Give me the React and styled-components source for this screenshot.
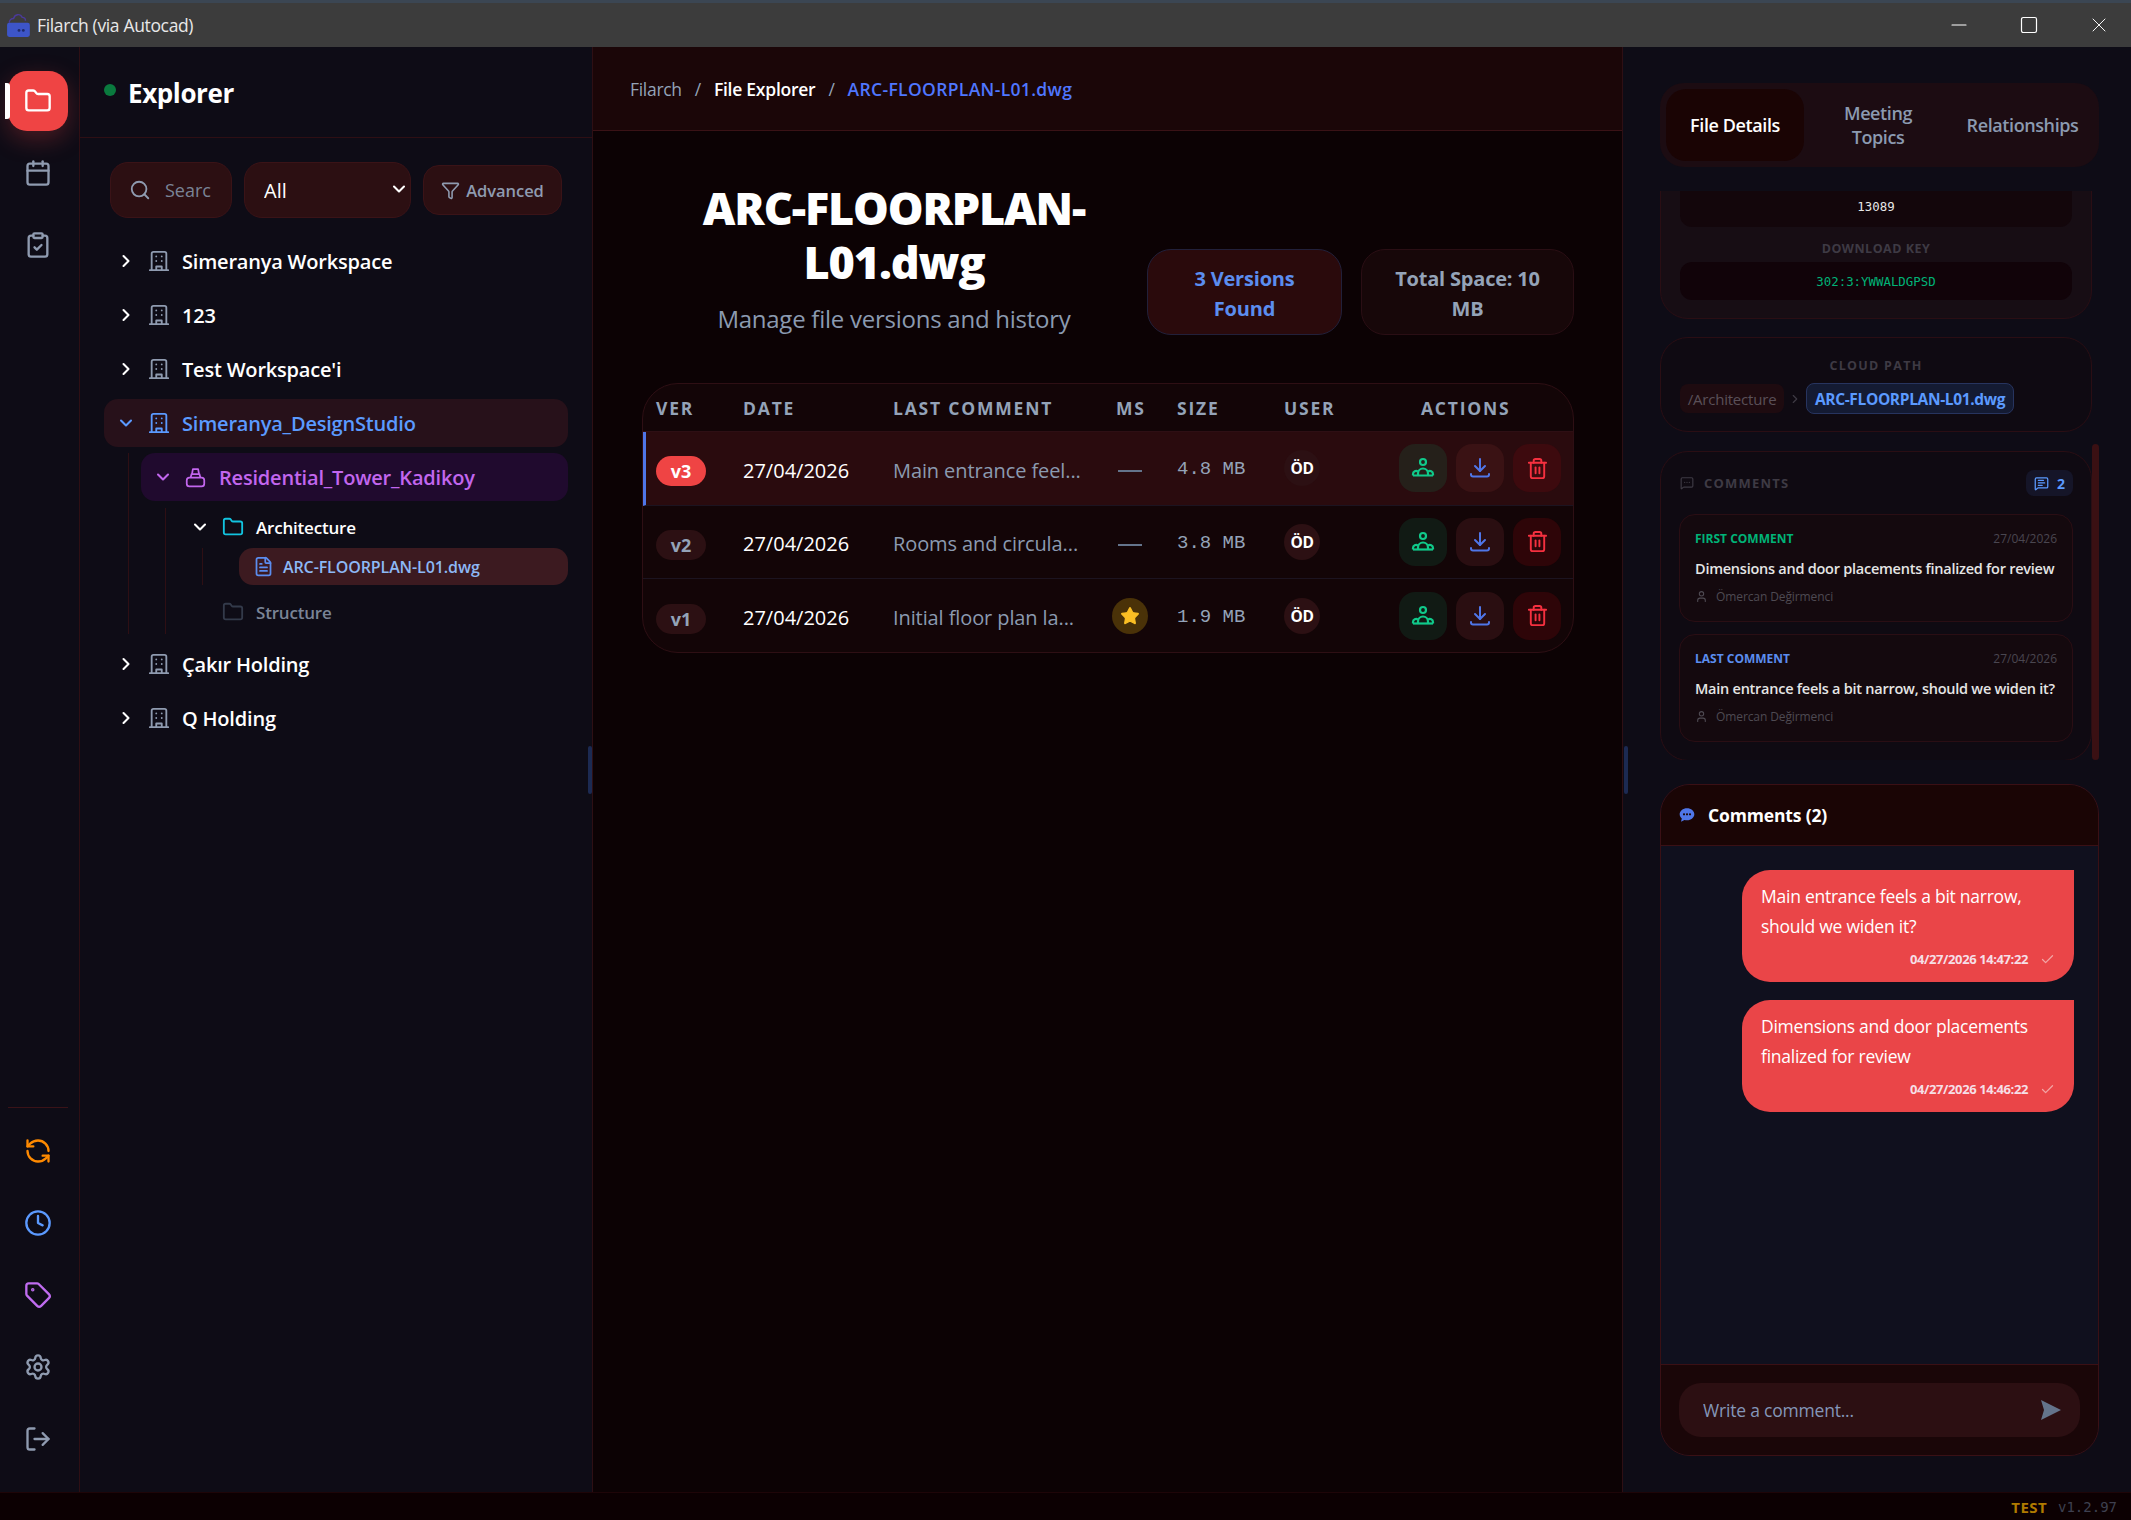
import React from "react";
import styled, { createGlobalStyle } from "styled-components";
import {
  Folder,
  Calendar,
  ClipboardCheck,
  RefreshCcw,
  Clock,
  Tag,
  Settings,
  LogOut,
  Search,
  Funnel,
  ChevronRight,
  ChevronDown,
  FileText,
  Trash2,
  Star,
  MessageSquareMore,
  MessageSquareText,
  User,
  Check,
  Minus,
  Square,
  X,
} from "lucide-react";

const SANS = `"Open Sans", "Noto Sans", sans-serif`;
const MONO = `"DejaVu Sans Mono", "Liberation Mono", monospace`;

const GlobalStyle = createGlobalStyle`
  html, body { margin: 0; padding: 0; background: #0c0003; }
  body { font-family: ${SANS}; overflow: hidden; }
  * { box-sizing: border-box; }
  input, select { font-family: ${SANS}; }
`;

const Shell = styled.div`
  width: 2131px;
  height: 1520px;
  display: flex;
  flex-direction: column;
  overflow: hidden;
`;

/* window title bar */
const TitleBar = styled.div`
  height: 47px;
  flex: none;
  background: #3c3c3c;
  border-top: 3px solid #3b4653;
  display: flex;
  align-items: center;
  padding-left: 6px;
  color: #e8e8e8;
  font-size: 17.5px;
  letter-spacing: -0.35px;
`;

const AppTitle = styled.span`
  margin-left: 5px;
`;

const WinControls = styled.div`
  margin-left: auto;
  display: flex;
  gap: 46px;
  padding-right: 20px;
  align-items: center;
  color: #fff;
`;

const WinButton = styled.span`
  display: flex;
  width: 24px;
  justify-content: center;
`;

const Body = styled.div`
  flex: 1;
  display: flex;
  min-height: 0;
`;

/* icon rail */
const Rail = styled.nav`
  width: 80px;
  flex: none;
  background: #0e0c16;
  border-right: 1px solid #2e0f14;
  display: flex;
  flex-direction: column;
  align-items: center;
  padding: 24px 0 11px;
`;

const RailButton = styled.div`
  position: relative;
  width: 60px;
  height: 60px;
  margin-bottom: 12px;
  margin-left: -3px;
  border-radius: 19px;
  display: flex;
  align-items: center;
  justify-content: center;
  color: ${({ $color }) => $color || "#8f9bb0"};
  background: ${({ $active }) => ($active ? "#ef4444" : "transparent")};
  box-shadow: ${({ $active }) => ($active ? "0 8px 24px rgba(239,68,68,.28)" : "none")};
`;

const RailMark = styled.span`
  position: absolute;
  left: -3px;
  top: 12px;
  width: 5px;
  height: 36px;
  background: #fff;
  border-radius: 0 3px 3px 0;
`;

const RailSpacer = styled.div`
  flex: 1;
`;

const RailDivider = styled.div`
  width: 60px;
  height: 1px;
  background: #3a1318;
  margin-bottom: 13px;
  margin-left: -3px;
`;

/* explorer column */
const Sidebar = styled.aside`
  width: 513px;
  flex: none;
  background: #0e0c16;
  border-right: 1px solid #2e0f14;
  position: relative;
  display: flex;
  flex-direction: column;
`;

const Handle = styled.span`
  position: absolute;
  right: ${({ $right }) => $right}px;
  top: 699px;
  width: 4px;
  height: 48px;
  background: #1c2a52;
  border-radius: 2px;
`;

const SideHead = styled.div`
  height: 91px;
  flex: none;
  border-bottom: 1px solid #2e0f14;
  display: flex;
  align-items: center;
  padding: 2px 0 0 24px;
  gap: 12px;
`;

const Dot = styled.span`
  width: 12px;
  height: 12px;
  border-radius: 50%;
  background: #0a7a3e;
  margin-top: -6px;
`;

const SideTitle = styled.h2`
  margin: 0;
  font-size: 26px;
  font-weight: 700;
  color: #fff;
  letter-spacing: -0.4px;
`;

const Filters = styled.div`
  display: flex;
  align-items: center;
  padding: 24px 30px 0 30px;
  gap: 12px;
`;

const SearchBox = styled.label`
  width: 122px;
  height: 56px;
  border-radius: 18px;
  background: #2c0f12;
  border: 1px solid #3a1317;
  display: flex;
  align-items: center;
  padding-left: 18px;
  gap: 14px;
  color: #8f9bb0;
`;

const SearchInput = styled.input`
  width: 46px;
  background: none;
  border: 0;
  outline: 0;
  padding: 0;
  font-size: 18px;
  color: #fff;
  &::placeholder {
    color: #7a8496;
    opacity: 1;
  }
`;

const SelectWrap = styled.div`
  position: relative;
  width: 167px;
  height: 56px;
  color: #fff;
`;

const Select = styled.select`
  appearance: none;
  width: 100%;
  height: 100%;
  border-radius: 18px;
  background: #2c0f12;
  border: 1px solid #3a1317;
  color: #fff;
  font-size: 20px;
  padding-left: 19px;
  outline: 0;
`;

const SelectArrow = styled.span`
  position: absolute;
  right: 2px;
  top: 17px;
  display: flex;
  pointer-events: none;
`;

const AdvancedButton = styled.button`
  width: 139px;
  height: 50px;
  border-radius: 16px;
  background: #2c0f12;
  border: 1px solid #3a1317;
  color: #8f9bb0;
  font-family: ${SANS};
  font-size: 16.5px;
  font-weight: 600;
  display: flex;
  align-items: center;
  justify-content: center;
  gap: 6px;
  letter-spacing: -0.05px;
`;

const Tree = styled.div`
  padding: 19px 24px 0;
  display: flex;
  flex-direction: column;
  gap: 6px;
`;

const TreeRow = styled.div`
  height: ${({ $h }) => $h || 48}px;
  margin-top: ${({ $top }) => $top || 0}px;
  border-radius: 14px;
  background: ${({ $bg }) => $bg || "transparent"};
  display: flex;
  align-items: center;
  color: ${({ $color }) => $color || "#fff"};
  font-size: ${({ $size }) => $size || 20}px;
  font-weight: 600;
  letter-spacing: -0.2px;
  white-space: nowrap;
`;

const Chevron = styled.span`
  width: 44px;
  padding-left: 12px;
  display: flex;
  flex: none;
  color: ${({ $color }) => $color || "#fff"};
`;

const TreeIcon = styled.span`
  width: ${({ $w }) => $w || 34}px;
  flex: none;
  display: flex;
  color: ${({ $color }) => $color || "#8f9bb0"};
`;

const Nested = styled.div`
  margin-left: 24px;
  padding-left: ${({ $pad }) => $pad || 12}px;
  margin-top: ${({ $top }) => $top || 0}px;
  border-left: 1px solid #2e0f14;
  display: flex;
  flex-direction: column;
  gap: ${({ $gap }) => $gap || 0}px;
`;

const FileRow = styled(TreeRow)`
  padding-left: 14px;
  font-size: 16px;
  height: 37px;
  letter-spacing: -0.1px;
`;

/* centre column */
const Main = styled.main`
  width: 1030px;
  flex: none;
  background: #0c0204;
  border-right: 1px solid #2e0f14;
  display: flex;
  flex-direction: column;
`;

const Crumbs = styled.div`
  height: 84px;
  flex: none;
  background: #1b0608;
  border-bottom: 1px solid #3a1216;
  display: flex;
  align-items: center;
  padding-left: 37px;
  font-size: 17.5px;
  letter-spacing: -0.3px;
  color: #94a3b8;
  gap: 13px;
`;

const CrumbNow = styled.span`
  color: ${({ $color }) => $color};
  font-weight: 600;
  letter-spacing: ${({ $spacing }) => $spacing || 0}px;
`;

const FileHead = styled.div`
  display: flex;
  align-items: flex-end;
  padding: 50px 48px 0 91px;
`;

const TitleBlock = styled.div`
  width: 420px;
  text-align: center;
  margin-right: 43px;
`;

const Title = styled.h1`
  margin: 0;
  font-size: 45px;
  line-height: 54px;
  font-weight: 800;
  color: #fff;
  letter-spacing: -1.15px;
`;

const Subtitle = styled.p`
  margin: 14px 0 0;
  font-size: 24px;
  line-height: 32px;
  color: #8b9ab0;
  letter-spacing: -0.25px;
`;

const Stats = styled.div`
  display: flex;
  gap: 19px;
`;

const Stat = styled.div`
  width: ${({ $w }) => $w}px;
  height: 86px;
  border-radius: 24px;
  background: ${({ $bg }) => $bg};
  border: 1px solid ${({ $line }) => $line};
  color: ${({ $color }) => $color};
  font-size: 20px;
  line-height: 30px;
  font-weight: 700;
  letter-spacing: -0.2px;
  text-align: center;
  padding: 14px 22px;
`;

const TableCard = styled.div`
  margin: 48px 48px 0 49px;
  border: 1px solid #2e0f14;
  border-radius: 36px;
  background: #130507;
  overflow: hidden;
`;

const columns = "87px 150px 223px 61px 107px 115px 1fr";

const HeadRow = styled.div`
  display: grid;
  grid-template-columns: ${columns};
  height: 48px;
  align-items: center;
  padding-left: 13px;
  border-bottom: 1px solid #2e0f14;
  font-size: 17.5px;
  font-weight: 700;
  letter-spacing: 1.8px;
  color: #94a3b8;
`;

const ActionsHead = styled.span`
  padding-left: 22px;
`;

const Row = styled.div`
  display: grid;
  grid-template-columns: ${columns};
  height: ${({ $last }) => ($last ? 73 : 73.5)}px;
  align-items: center;
  padding-left: ${({ $active }) => ($active ? 10 : 13)}px;
  background: ${({ $active }) => ($active ? "#2a0b0e" : "transparent")};
  border-left: ${({ $active }) => ($active ? "3px solid #4f76e8" : "0")};
  border-bottom: ${({ $last }) => ($last ? "0" : "1px solid #1c1420")};
`;

const VersionBadge = styled.span`
  width: 50px;
  height: 30px;
  margin-top: 6px;
  border-radius: 15px;
  background: ${({ $active }) => ($active ? "#ef4444" : "#2c1013")};
  color: ${({ $active }) => ($active ? "#fff" : "#94a3b8")};
  font-size: 18px;
  font-weight: 700;
  display: flex;
  align-items: center;
  justify-content: center;
`;

const DateCell = styled.span`
  margin-top: 4px;
  color: #fff;
  font-size: 20px;
`;

const CommentCell = styled.span`
  margin-top: 4px;
  color: #8b9ab0;
  font-size: 20px;
  letter-spacing: -0.1px;
  white-space: nowrap;
`;

const Dash = styled.span`
  width: 24px;
  margin: 6px 0 0 2px;
  height: 2px;
  background: #64748b;
`;

const StarBubble = styled.span`
  width: 36px;
  height: 36px;
  margin-left: -4px;
  border-radius: 50%;
  background: #4a3208;
  color: #fbbf24;
  display: flex;
  align-items: center;
  justify-content: center;
`;

const SizeCell = styled.span`
  margin-top: 2px;
  font-family: "Liberation Mono", monospace;
  font-size: 19px;
  white-space: pre;
  color: #94a3b8;
`;

const Avatar = styled.span`
  width: 36px;
  height: 36px;
  border-radius: 50%;
  background: #2c1013;
  color: #fff;
  font-size: 15.5px;
  font-weight: 700;
  display: flex;
  align-items: center;
  justify-content: center;
  letter-spacing: -0.3px;
`;

const Actions = styled.div`
  display: flex;
  gap: 9px;
`;

const ActionButton = styled.button`
  width: 48px;
  height: 48px;
  padding: 0;
  border: 0;
  border-radius: 16px;
  background: ${({ $bg }) => $bg};
  color: ${({ $color }) => $color};
  display: flex;
  align-items: center;
  justify-content: center;
`;

/* details column */
const Details = styled.section`
  flex: 1;
  min-width: 0;
  background: #0e0c16;
  display: flex;
  flex-direction: column;
  padding: 36px 32px 36px 37px;
  position: relative;
`;

const Tabs = styled.div`
  height: 84px;
  flex: none;
  border-radius: 24px;
  background: #1c0c12;
  display: grid;
  grid-template-columns: 138px 148px 1fr;
  padding: 6px;
  align-items: center;
  color: #8b9ab0;
  font-size: 18px;
  line-height: 24px;
  font-weight: 600;
  letter-spacing: -0.4px;
  text-align: center;
`;

const Tab = styled.div`
  height: 72px;
  border-radius: 20px;
  display: flex;
  align-items: center;
  justify-content: center;
  background: ${({ $active }) => ($active ? "#1a0404" : "transparent")};
  color: ${({ $active }) => ($active ? "#fff" : "#8b9ab0")};
`;

const Scroller = styled.div`
  margin-top: 24px;
  height: 569px;
  flex: none;
  overflow: hidden;
  position: relative;
  padding-right: 7px;
`;

const Thumb = styled.span`
  position: absolute;
  right: 0;
  top: 253px;
  width: 7px;
  height: 316px;
  border-radius: 4px;
  background: #3a1013;
`;

const Card = styled.div`
  border: 1px solid #2a0e14;
  border-radius: 28px;
  background: ${({ $bg }) => $bg || "#0f0a12"};
  height: ${({ $h }) => ($h ? `${$h}px` : "auto")};
  padding: ${({ $pad }) => $pad || "18px 19px"};
  margin-bottom: ${({ $gap }) => $gap || 18}px;
`;

const ScrolledCard = styled(Card)`
  margin-top: -40px;
  padding: 0 19px 19px;
  height: 168px;
`;

const ValueBox = styled.div`
  height: ${({ $h }) => $h}px;
  border-radius: 12px;
  background: #13060b;
  display: flex;
  align-items: ${({ $align }) => $align || "center"};
  justify-content: center;
  padding-bottom: ${({ $bottom }) => $bottom || 0}px;
  font-family: ${MONO};
  font-size: 12.4px;
  color: ${({ $color }) => $color};
`;

const KeyBox = styled(ValueBox)`
  background: #110309;
`;

const FieldLabel = styled.div`
  text-align: center;
  color: #3e3a44;
  font-size: 12.5px;
  font-weight: 700;
  letter-spacing: ${({ $wide }) => ($wide ? 1.3 : 0.5)}px;
  line-height: 16px;
  margin: ${({ $margin }) => $margin || 0};
`;

const PathRow = styled.div`
  display: flex;
  align-items: center;
  margin-top: 9px;
`;

const PathPill = styled.span`
  height: 29px;
  width: 104px;
  border-radius: 8px;
  background: #1e0b10;
  color: #5a5058;
  font-size: 15px;
  letter-spacing: -0.2px;
  display: flex;
  align-items: center;
  justify-content: center;
`;

const PathSep = styled.span`
  width: 22px;
  display: flex;
  justify-content: center;
  color: #3e3a44;
`;

const PathFile = styled.span`
  height: 31px;
  width: 208px;
  border-radius: 8px;
  background: #141b33;
  border: 1px solid #27345f;
  color: #5b9aff;
  font-size: 15.5px;
  font-weight: 700;
  letter-spacing: -0.35px;
  display: flex;
  align-items: center;
  justify-content: center;
`;

const CommentsHead = styled.div`
  display: flex;
  align-items: center;
  justify-content: space-between;
  margin-bottom: 18px;
`;

const HeadLabel = styled.div`
  display: flex;
  align-items: center;
  gap: 10px;
  margin-left: 1px;
  color: #3e3a44;
  font-size: 13px;
  font-weight: 700;
  letter-spacing: 1.2px;
`;

const CountBadge = styled.span`
  width: 47px;
  height: 26px;
  border-radius: 8px;
  background: #151528;
  color: #5b9aff;
  font-size: 14px;
  font-weight: 700;
  display: flex;
  align-items: center;
  justify-content: center;
  gap: 8px;
`;

const CommentBox = styled.div`
  height: 108px;
  border: 1px solid #2a0e14;
  border-radius: 16px;
  background: #14090e;
  padding: 16px 15px 0 15px;
  margin-bottom: 12px;
  &:last-child {
    margin-bottom: 0;
  }
`;

const CommentTop = styled.div`
  display: flex;
  justify-content: space-between;
  align-items: center;
  font-size: 12px;
  line-height: 16px;
`;

const CommentKind = styled.span`
  color: ${({ $color }) => $color};
  font-weight: 700;
  letter-spacing: 0;
`;

const CommentDate = styled.span`
  color: #4a4650;
`;

const CommentText = styled.div`
  margin-top: 12px;
  color: #e5e5e5;
  font-size: 14.5px;
  line-height: 20px;
  font-weight: 600;
  letter-spacing: -0.25px;
  white-space: nowrap;
`;

const CommentUser = styled.div`
  margin-top: 9px;
  display: flex;
  align-items: center;
  gap: 8px;
  color: #4e4a52;
  font-size: 12px;
  letter-spacing: -0.1px;
`;

/* chat */
const Chat = styled.div`
  flex: 1;
  min-height: 0;
  margin-top: 24px;
  border: 1px solid #3a1015;
  border-radius: 30px;
  overflow: hidden;
  display: flex;
  flex-direction: column;
  background: #10101e;
`;

const ChatHead = styled.div`
  height: 61px;
  flex: none;
  background: #1a0505;
  border-bottom: 1px solid #3a1015;
  display: flex;
  align-items: center;
  padding-left: 18px;
  gap: 13px;
  color: #fff;
  font-size: 17.5px;
  font-weight: 700;
  letter-spacing: -0.15px;
`;

const ChatIcon = styled.span`
  display: flex;
  color: #4f76e8;
`;

const Messages = styled.div`
  flex: 1;
  padding: 24px 24px 0 0;
  display: flex;
  flex-direction: column;
  align-items: flex-end;
  gap: 18px;
`;

const Bubble = styled.div`
  width: 332px;
  height: 112px;
  background: #ea4548;
  border-radius: 28px 0 28px 28px;
  padding: 12px 19px;
  color: #fff;
  font-size: 17.5px;
  line-height: 29.5px;
  letter-spacing: -0.25px;
`;

const BubbleMeta = styled.div`
  display: flex;
  justify-content: flex-end;
  align-items: center;
  gap: 12px;
  font-size: 13px;
  line-height: 18px;
  font-weight: 700;
  margin-top: 9px;
  letter-spacing: -0.4px;
  color: #f6dfe6;
`;

const MetaCheck = styled.span`
  display: flex;
  color: #f2a5a5;
`;

const ChatFoot = styled.div`
  height: 91px;
  flex: none;
  background: #1a0608;
  border-top: 1px solid #3a1015;
  padding: 18px 18px 0;
`;

const ChatInput = styled.div`
  height: 54px;
  border-radius: 22px;
  background: #2c0f12;
  display: flex;
  align-items: center;
  padding: 0 19px 0 24px;
`;

const ChatField = styled.input`
  flex: 1;
  background: none;
  border: 0;
  outline: 0;
  padding: 0;
  font-size: 17.5px;
  letter-spacing: -0.2px;
  color: #fff;
  &::placeholder {
    color: #8496b8;
    opacity: 1;
  }
`;

const Footer = styled.footer`
  height: 28px;
  flex: none;
  background: #0c0002;
  border-top: 1px solid #1e0508;
  display: flex;
  align-items: center;
  justify-content: flex-end;
  gap: 11px;
  padding-right: 14px;
  font-family: ${MONO};
  font-size: 14px;
`;

const EnvTag = styled.span`
  color: #b07a00;
  font-weight: 700;
  font-family: ${SANS};
  font-size: 15px;
  letter-spacing: 0.4px;
`;

const VersionTag = styled.span`
  color: #3e4050;
`;

//icons lucide does not have
const AppLogo = () => (
  <svg width="26" height="26" viewBox="0 0 24 24">
    <path d="M3 10c0-3 2-4 4-4 1-4 6-5 8-1 1.500 0 3 1 3 3" fill="none" stroke="#4b3a9a" strokeWidth="1.300" />
    <path d="M1 12a2 2 0 0 1 2-2h17a2 2 0 0 1 2 2v9a2 2 0 0 1-2 2H3a2 2 0 0 1-2-2z" fill="#3d55c8" />
    <circle cx="12" cy="17" r="1.300" fill="#1f2a6a" />
    <circle cx="16" cy="17" r="1.300" fill="#1f2a6a" />
  </svg>
);

const WorkspaceIcon = () => (
  <svg width="22" height="22" viewBox="0 0 24 24" fill="none" stroke="currentColor" strokeWidth="2" strokeLinecap="round" strokeLinejoin="round">
    <path d="M2 22h20" />
    <path d="M4 22V4a2 2 0 0 1 2-2h12a2 2 0 0 1 2 2v18" />
    <path d="M9 22v-4h6v4" />
    <path d="M9 7h.01M15 7h.01M9 12h.01M15 12h.01" />
  </svg>
);

const ProjectIcon = () => (
  <svg width="21" height="21" viewBox="0 0 24 24" fill="none" stroke="currentColor" strokeWidth="2" strokeLinejoin="round">
    <rect x="2" y="12" width="20" height="10" rx="3" />
    <path d="M6.500 12l1-4h9l1 4" />
    <path d="M8 8l1-5.500h6L16 8" />
  </svg>
);

const AssignIcon = () => (
  <svg width="24" height="24" viewBox="0 0 24 24" fill="none" stroke="currentColor" strokeWidth="2.200" strokeLinejoin="round">
    <circle cx="12" cy="6" r="3" />
    <path d="M2 19.500v-1.500a3 3 0 0 1 5-2.300M22 19.500v-1.500a3 3 0 0 0-5-2.300" />
    <path d="M7 19.500v-2a5 5 0 0 1 10 0v2" />
    <path d="M2 19.500h20" />
  </svg>
);

const DownloadIcon = () => (
  <svg width="24" height="24" viewBox="0 0 24 24" fill="none" stroke="currentColor" strokeWidth="2" strokeLinecap="round" strokeLinejoin="round">
    <path d="M12 3v12" />
    <path d="M7 10l5 5 5-5" />
    <path d="M3 18v.500a2 2 0 0 0 2 2h14a2 2 0 0 0 2-2V18" />
  </svg>
);

const ChatBubbleIcon = () => (
  <svg width="16" height="16" viewBox="0 0 24 24">
    <path d="M12 2C5.900 2 1 6 1 11c0 2.500 1.200 4.700 3.200 6.300L3 22l5.200-2.600c1.200.4 2.500.6 3.800.6 6.100 0 11-4 11-9s-4.900-9-11-9z" fill="currentColor" />
    <circle cx="7.500" cy="11" r="1.600" fill="#1a0505" />
    <circle cx="12" cy="11" r="1.600" fill="#1a0505" />
    <circle cx="16.500" cy="11" r="1.600" fill="#1a0505" />
  </svg>
);

const SendIcon = () => (
  <svg width="20" height="20" viewBox="0 0 20 20">
    <path d="M0 0l20 10L0 20l3-10z" fill="#64748b" />
  </svg>
);

const workspacesTop = ["Simeranya Workspace", "123", "Test Workspace'i"];
const workspacesBottom = ["Çakır Holding", "Q Holding"];

const versions = [
  { id: "v3", comment: "Main entrance feel...", size: "4.8 MB", active: true },
  { id: "v2", comment: "Rooms and circula...", size: "3.8 MB" },
  { id: "v1", comment: "Initial floor plan la...", size: "1.9 MB", milestone: true },
];

const notes = [
  {
    kind: "FIRST COMMENT",
    color: "#00b377",
    text: "Dimensions and door placements finalized for review",
  },
  {
    kind: "LAST COMMENT",
    color: "#5b8def",
    text: "Main entrance feels a bit narrow, should we widen it?",
  },
];

const messages = [
  { text: "Main entrance feels a bit narrow, should we widen it?", time: "04/27/2026 14:47:22" },
  { text: "Dimensions and door placements finalized for review", time: "04/27/2026 14:46:22" },
];

const Workspace = ({ name }) => (
  <TreeRow>
    <Chevron>
      <ChevronRight size={20} strokeWidth={2.5} />
    </Chevron>
    <TreeIcon>
      <WorkspaceIcon />
    </TreeIcon>
    {name}
  </TreeRow>
);

const VersionRow = ({ version, last }) => (
  <Row $active={version.active} $last={last}>
    <VersionBadge $active={version.active}>{version.id}</VersionBadge>
    <DateCell>27/04/2026</DateCell>
    <CommentCell>{version.comment}</CommentCell>
    {version.milestone ? (
      <StarBubble>
        <Star size={20} fill="currentColor" strokeWidth={1.5} />
      </StarBubble>
    ) : (
      <Dash />
    )}
    <SizeCell>{version.size}</SizeCell>
    <Avatar>ÖD</Avatar>
    <Actions>
      <ActionButton $bg={version.active ? "#25201a" : "#111a14"} $color="#10c98a">
        <AssignIcon />
      </ActionButton>
      <ActionButton $bg={version.active ? "#3a1214" : "#2a0e11"} $color="#4f76e8">
        <DownloadIcon />
      </ActionButton>
      <ActionButton $bg={version.active ? "#3d0a0e" : "#2e0508"} $color="#f5303f">
        <Trash2 size={23} />
      </ActionButton>
    </Actions>
  </Row>
);

const App = () => {
  return (
    <Shell>
      <GlobalStyle />
      <TitleBar>
        <AppLogo />
        <AppTitle>Filarch (via Autocad)</AppTitle>
        <WinControls>
          <WinButton>
            <Minus size={26} strokeWidth={1.2} absoluteStrokeWidth />
          </WinButton>
          <WinButton>
            <Square size={20} strokeWidth={1.2} absoluteStrokeWidth />
          </WinButton>
          <WinButton>
            <X size={30} strokeWidth={1.2} absoluteStrokeWidth />
          </WinButton>
        </WinControls>
      </TitleBar>

      <Body>
        <Rail>
          <RailButton $active $color="#fff">
            <RailMark />
            <Folder size={28} />
          </RailButton>
          <RailButton>
            <Calendar size={28} />
          </RailButton>
          <RailButton>
            <ClipboardCheck size={28} />
          </RailButton>
          <RailSpacer />
          <RailDivider />
          <RailButton $color="#ff8a00">
            <RefreshCcw size={28} />
          </RailButton>
          <RailButton $color="#5b9aff">
            <Clock size={28} />
          </RailButton>
          <RailButton $color="#c06cf0">
            <Tag size={28} />
          </RailButton>
          <RailButton>
            <Settings size={28} />
          </RailButton>
          <RailButton>
            <LogOut size={28} />
          </RailButton>
        </Rail>

        <Sidebar>
          <SideHead>
            <Dot />
            <SideTitle>Explorer</SideTitle>
          </SideHead>
          <Filters>
            <SearchBox>
              <Search size={22} />
              <SearchInput placeholder="Search..." />
            </SearchBox>
            <SelectWrap>
              <Select defaultValue="All">
                <option>All</option>
              </Select>
              <SelectArrow>
                <ChevronDown size={20} strokeWidth={2.5} />
              </SelectArrow>
            </SelectWrap>
            <AdvancedButton>
              <Funnel size={19} />
              Advanced
            </AdvancedButton>
          </Filters>
          <Tree>
            {workspacesTop.map((name) => (
              <Workspace key={name} name={name} />
            ))}
            <TreeRow $bg="#27111a" $color="#5b9aff">
              <Chevron $color="#5b9aff">
                <ChevronDown size={20} strokeWidth={2.5} />
              </Chevron>
              <TreeIcon $color="#5b9aff">
                <WorkspaceIcon />
              </TreeIcon>
              Simeranya_DesignStudio
            </TreeRow>
            <Nested $gap={7}>
              <TreeRow $bg="#200a2e" $color="#c266ee">
                <Chevron $color="#c266ee">
                  <ChevronDown size={20} strokeWidth={2.5} />
                </Chevron>
                <TreeIcon $color="#c266ee">
                  <ProjectIcon />
                </TreeIcon>
                Residential_Tower_Kadikoy
              </TreeRow>
              <Nested>
                <TreeRow $h={38} $size={17}>
                  <Chevron>
                    <ChevronDown size={20} strokeWidth={2.5} />
                  </Chevron>
                  <TreeIcon $color="#12c4e0">
                    <Folder size={22} strokeWidth={2} />
                  </TreeIcon>
                  Architecture
                </TreeRow>
                <Nested $pad={36} $top={2}>
                  <FileRow $bg="#3c1a20" $color="#8db8f5">
                    <TreeIcon $w={30} $color="#5b8def">
                      <FileText size={21} strokeWidth={2} />
                    </TreeIcon>
                    ARC-FLOORPLAN-L01.dwg
                  </FileRow>
                </Nested>
                <TreeRow $h={44} $top={5} $size={17} $color="#7a8496">
                  <Chevron />
                  <TreeIcon $color="#333a4a">
                    <Folder size={22} strokeWidth={2} />
                  </TreeIcon>
                  Structure
                </TreeRow>
              </Nested>
            </Nested>
            {workspacesBottom.map((name) => (
              <Workspace key={name} name={name} />
            ))}
          </Tree>
          <Handle $right={0} />
        </Sidebar>

        <Main>
          <Crumbs>
            <span>Filarch</span>
            <span>/</span>
            <CrumbNow $color="#fff" $spacing={-0.25}>File Explorer</CrumbNow>
            <span>/</span>
            <CrumbNow $color="#4f76ff" $spacing={0.35}>ARC-FLOORPLAN-L01.dwg</CrumbNow>
          </Crumbs>
          <FileHead>
            <TitleBlock>
              <Title>ARC-FLOORPLAN-L01.dwg</Title>
              <Subtitle>Manage file versions and history</Subtitle>
            </TitleBlock>
            <Stats>
              <Stat $w={195} $bg="#2a0a0c" $line="#22203a" $color="#5b8def">
                3 Versions Found
              </Stat>
              <Stat $w={213} $bg="#170709" $line="#2a0e14" $color="#94a3b8">
                Total Space: 10 MB
              </Stat>
            </Stats>
          </FileHead>
          <TableCard>
            <HeadRow>
              <span>VER</span>
              <span>DATE</span>
              <span>LAST COMMENT</span>
              <span>MS</span>
              <span>SIZE</span>
              <span>USER</span>
              <ActionsHead>ACTIONS</ActionsHead>
            </HeadRow>
            {versions.map((version, index) => (
              <VersionRow key={version.id} version={version} last={index === versions.length - 1} />
            ))}
          </TableCard>
        </Main>

        <Details>
          <Tabs>
            <Tab $active>File Details</Tab>
            <Tab>
              Meeting
              <br />
              Topics
            </Tab>
            <Tab>Relationships</Tab>
          </Tabs>
          <Scroller>
            <ScrolledCard $bg="#170d14">
              <ValueBox $h={75} $align="flex-end" $bottom={13} $color="#e8e8e8">
                13089
              </ValueBox>
              <FieldLabel $margin="14px 0 5px">DOWNLOAD KEY</FieldLabel>
              <KeyBox $h={38} $color="#00b377">
                302:3:YWWALDGPSD
              </KeyBox>
            </ScrolledCard>
            <Card $h={95} $pad="20px 19px 0" $gap={19}>
              <FieldLabel $wide>CLOUD PATH</FieldLabel>
              <PathRow>
                <PathPill>/Architecture</PathPill>
                <PathSep>
                  <ChevronRight size={14} />
                </PathSep>
                <PathFile>ARC-FLOORPLAN-L01.dwg</PathFile>
              </PathRow>
            </Card>
            <Card $pad="18px 18px 18px 18px">
              <CommentsHead>
                <HeadLabel>
                  <MessageSquareMore size={14} />
                  COMMENTS
                </HeadLabel>
                <CountBadge>
                  <MessageSquareText size={15} />2
                </CountBadge>
              </CommentsHead>
              {notes.map((note) => (
                <CommentBox key={note.kind}>
                  <CommentTop>
                    <CommentKind $color={note.color}>{note.kind}</CommentKind>
                    <CommentDate>27/04/2026</CommentDate>
                  </CommentTop>
                  <CommentText>{note.text}</CommentText>
                  <CommentUser>
                    <User size={13} />
                    Ömercan Değirmenci
                  </CommentUser>
                </CommentBox>
              ))}
            </Card>
            <Thumb />
          </Scroller>
          <Chat>
            <ChatHead>
              <ChatIcon>
                <ChatBubbleIcon />
              </ChatIcon>
              Comments (2)
            </ChatHead>
            <Messages>
              {messages.map((message) => (
                <Bubble key={message.time}>
                  {message.text}
                  <BubbleMeta>
                    {message.time}
                    <MetaCheck>
                      <Check size={15} />
                    </MetaCheck>
                  </BubbleMeta>
                </Bubble>
              ))}
            </Messages>
            <ChatFoot>
              <ChatInput>
                <ChatField placeholder="Write a comment..." />
                <SendIcon />
              </ChatInput>
            </ChatFoot>
          </Chat>
          <Handle $right={503} />
        </Details>
      </Body>

      <Footer>
        <EnvTag>TEST</EnvTag>
        <VersionTag>v1.2.97</VersionTag>
      </Footer>
    </Shell>
  );
};

export default App;
